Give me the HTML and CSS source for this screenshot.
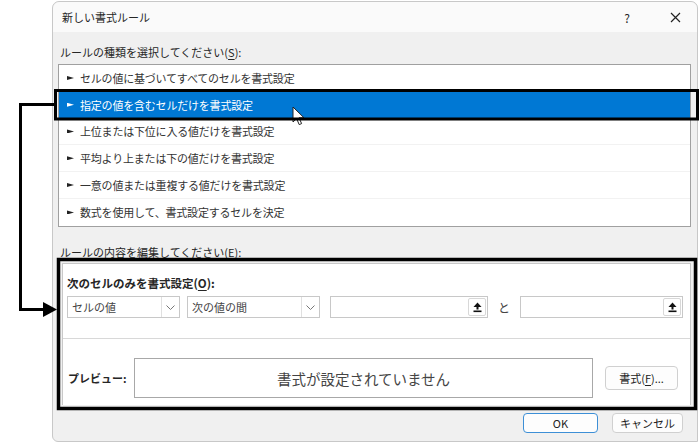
FILE: index.html
```html
<!DOCTYPE html>
<html lang="ja">

<head>
    <meta charset="UTF-8">
    <meta name="viewport" content="width=device-width, initial-scale=1.0">
    <title>新しい書式ルール</title>
    <link rel="stylesheet" href="styles.css">
</head>

<body>

    <div class="dialog">
        <div class="titlebar">
            <span class="title">新しい書式ルール</span>
            <span class="help">?</span>
            <span class="close">
                <svg width="11" height="11" viewBox="0 0 11 11"><path d="M1 1L10 10M10 1L1 10" stroke="#222" stroke-width="1.2" /></svg>
            </span>
        </div>

        <div class="dialog-body">
            <div class="section-label">ルールの種類を選択してください(<u>S</u>):</div>

            <!-- ルールの種類 -->
            <ul class="rule-list">
                <li><span class="pointer"></span>セルの値に基づいてすべてのセルを書式設定</li>
                <li class="selected"><span class="pointer"></span>指定の値を含むセルだけを書式設定</li>
                <li><span class="pointer"></span>上位または下位に入る値だけを書式設定</li>
                <li><span class="pointer"></span>平均より上または下の値だけを書式設定</li>
                <li><span class="pointer"></span>一意の値または重複する値だけを書式設定</li>
                <li><span class="pointer"></span>数式を使用して、書式設定するセルを決定</li>
            </ul>

            <div class="section-label edit-label">ルールの内容を編集してください(<u>E</u>):</div>

            <!-- ルールの内容 -->
            <div class="rule-panel">
                <div class="panel-top">
                    <div class="panel-title">次のセルのみを書式設定(<u>O</u>):</div>
                    <div class="cond-row">
                        <div class="combo combo-a">
                            <span class="combo-text">セルの値</span>
                            <span class="chev"><svg width="9" height="5" viewBox="0 0 9 5"><path d="M0.5 0.5L4.5 4.5L8.5 0.5" fill="none" stroke="#777" stroke-width="1" /></svg></span>
                        </div>
                        <div class="combo combo-b">
                            <span class="combo-text">次の値の間</span>
                            <span class="chev"><svg width="9" height="5" viewBox="0 0 9 5"><path d="M0.5 0.5L4.5 4.5L8.5 0.5" fill="none" stroke="#777" stroke-width="1" /></svg></span>
                        </div>
                        <div class="value-box box-a">
                            <span class="pick-btn"><svg width="9" height="11" viewBox="0 0 9 11"><path d="M4.5 0.5L8.5 5H0.5Z" fill="#111" /><rect x="3.5" y="5" width="2" height="2.5" fill="#111" /><rect x="0.5" y="8.5" width="8" height="1.6" fill="#111" /></svg></span>
                        </div>
                        <span class="and">と</span>
                        <div class="value-box box-b">
                            <span class="pick-btn"><svg width="9" height="11" viewBox="0 0 9 11"><path d="M4.5 0.5L8.5 5H0.5Z" fill="#111" /><rect x="3.5" y="5" width="2" height="2.5" fill="#111" /><rect x="0.5" y="8.5" width="8" height="1.6" fill="#111" /></svg></span>
                        </div>
                    </div>
                </div>
                <div class="panel-bottom">
                    <span class="preview-label">プレビュー:</span>
                    <div class="preview-box">書式が設定されていません</div>
                    <button class="btn format-btn">書式(<u>F</u>)...</button>
                </div>
            </div>

            <div class="dialog-buttons">
                <button class="btn ok-btn">OK</button>
                <button class="btn cancel-btn">キャンセル</button>
            </div>
        </div>
    </div>

    <!-- マウスカーソル -->
    <svg class="cursor" width="14" height="20" viewBox="0 0 14 20">
        <path d="M1 1V16L4.6 12.6L7.2 18.6L9.6 17.6L7 11.8H12Z" fill="#fff" stroke="#222" stroke-width="1" stroke-linejoin="round" />
    </svg>

    <!-- 注釈の枠と矢印 -->
    <svg class="annot" width="700" height="443" viewBox="0 0 700 443">
        <rect x="55.5" y="90.5" width="642" height="28.5" fill="none" stroke="#000" stroke-width="3" />
        <path d="M54 104.5H20.5V309.5H45" fill="none" stroke="#000" stroke-width="3" />
        <path d="M43 302L57 309.5L43 317Z" fill="#000" />
        <rect x="58.5" y="259.5" width="637" height="149" fill="none" stroke="#000" stroke-width="3.5" />
    </svg>

</body>

</html>
```

FILE: styles.css
```css
* {
    box-sizing: border-box;
}

body {
    margin: 0;
    width: 700px;
    height: 443px;
    overflow: hidden;
    position: relative;
    background-color: #fff;
    font-family: "Noto Sans CJK JP", "Noto Sans", sans-serif;
    font-size: 11px;
    color: #262626;
}

u {
    text-underline-offset: 2px;
}

.dialog {
    margin: 1px 0 0 52px;
    width: 646px;
    height: 441px;
    border: 1px solid #c8c8c8;
    border-radius: 7px 7px 0 6px;
    background-color: #f0f0f0;
    display: flex;
    flex-direction: column;
}

.titlebar {
    height: 30px;
    display: flex;
    align-items: center;
    padding-left: 9px;
    background-color: #fafafa;
    border-radius: 7px 7px 0 0;
}

.title {
    flex: 1;
}

.help {
    width: 12px;
    text-align: center;
    font-size: 12px;
    margin-right: 20px;
}

.close {
    width: 44px;
    display: flex;
    justify-content: center;
}

.dialog-body {
    padding: 13px 6px 0 5px;
    display: flex;
    flex-direction: column;
}

.section-label {
    padding-left: 2px;
    line-height: 14px;
    height: 14px;
}

.edit-label {
    margin-top: 18px;
}

/* ルール一覧 */
.rule-list {
    list-style: none;
    margin: 5px 0 0 0;
    padding: 0;
    height: 163px;
    background-color: #fff;
    border: 1px solid #a0a0a0;
}

.rule-list li {
    height: 26.8px;
    display: flex;
    align-items: center;
    padding-left: 8px;
    border-bottom: 1px solid #f2f2f2;
    color: #333;
    letter-spacing: -0.2px;
}

.rule-list li:last-child {
    border-bottom: none;
}

.rule-list li.selected {
    background-color: #0078d4;
    color: #fff;
}

.pointer {
    width: 7px;
    height: 4px;
    margin-right: 6px;
    background-color: #222;
    clip-path: polygon(0 0, 100% 50%, 0 100%);
}

.selected .pointer {
    background-color: #fff;
}

/* ルールの内容 */
.rule-panel {
    margin: 4px 0 0 4px;
    height: 142px;
    background-color: #fff;
    border: 1px solid #c8c8c8;
    border-bottom: none;
}

.panel-top {
    height: 75px;
    padding: 11px 0 0 4px;
    border-bottom: 1px solid #d8d8d8;
}

.panel-title {
    font-weight: bold;
    font-size: 11.5px;
    line-height: 16px;
}

.cond-row {
    margin-top: 5px;
    display: flex;
    align-items: center;
}

.combo,
.value-box {
    height: 22px;
    border: 1px solid #c8c8c8;
    background-color: #fff;
    display: flex;
    align-items: center;
}

.combo-text {
    flex: 1;
    padding-left: 4px;
    color: #444;
}

.combo-a {
    width: 113px;
}

.combo-b {
    width: 133px;
    margin-left: 7px;
}

.chev {
    width: 18px;
    height: 20px;
    border-left: 1px solid #e0e0e0;
    display: flex;
    justify-content: center;
    align-items: center;
}

.value-box {
    justify-content: flex-end;
    padding-right: 1px;
}

.box-a {
    width: 158px;
    margin-left: 10px;
}

.box-b {
    width: 163px;
}

.pick-btn {
    width: 18px;
    height: 18px;
    border: 1px solid #d8d8d8;
    border-radius: 2px;
    display: flex;
    justify-content: center;
    align-items: center;
}

.and {
    width: 32px;
    text-align: center;
    font-size: 12px;
    color: #444;
}

.panel-bottom {
    height: 66px;
    padding: 19px 12px 0 5px;
    display: flex;
    align-items: flex-start;
}

.preview-label {
    font-weight: bold;
    line-height: 40px;
    width: 66px;
}

.preview-box {
    width: 460px;
    height: 40px;
    border: 1px solid #a8a8a8;
    display: flex;
    justify-content: center;
    align-items: center;
    font-size: 14.5px;
    color: #444;
}

.btn {
    font-family: inherit;
    font-size: 11px;
    color: #222;
    background-color: #fdfdfd;
    border: 1px solid #d0d0d0;
    border-radius: 4px;
    padding: 0;
}

.format-btn {
    width: 73px;
    height: 24px;
    margin: 8px 0 0 12px;
}

.dialog-buttons {
    margin-top: 8px;
    display: flex;
    justify-content: flex-end;
    gap: 14px;
    padding-right: 8px;
}

.ok-btn {
    width: 75px;
    height: 20px;
    border-color: #3d8fd6;
}

.cancel-btn {
    width: 71px;
    height: 20px;
}

/* 重ね表示 */
.cursor {
    position: absolute;
    left: 292px;
    top: 106px;
}

.annot {
    position: absolute;
    left: 0;
    top: 0;
    pointer-events: none;
}
```
